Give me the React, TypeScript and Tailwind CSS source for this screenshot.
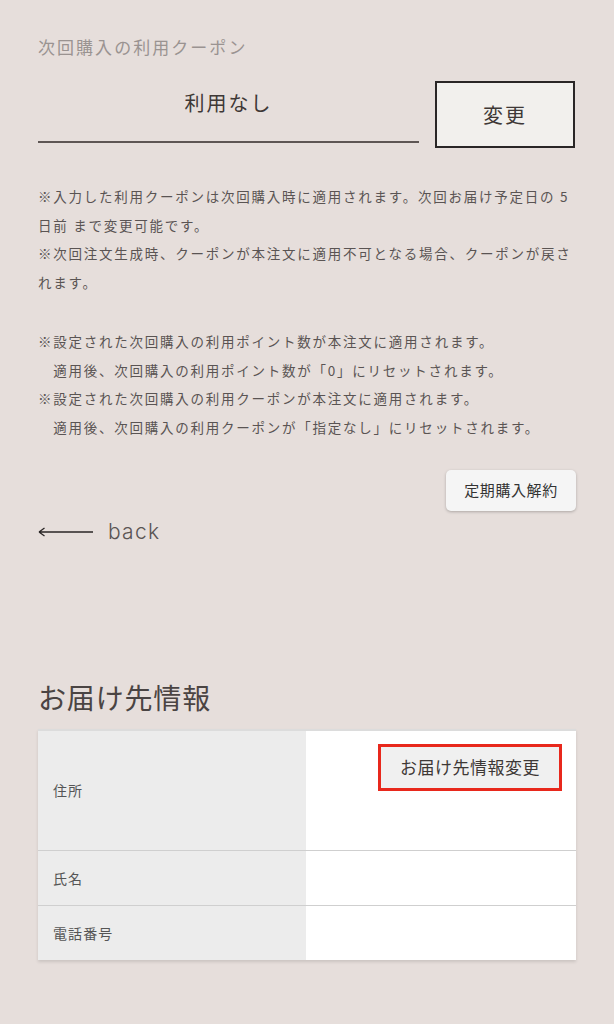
import React from 'react';

const notesA = [
    '※入力した利用クーポンは次回購入時に適用されます。次回お届け予定日の 5',
    '日前 まで変更可能です。',
    '※次回注文生成時、クーポンが本注文に適用不可となる場合、クーポンが戻さ',
    'れます。',
];

const notesB = [
    '※設定された次回購入の利用ポイント数が本注文に適用されます。',
    '\u3000適用後、次回購入の利用ポイント数が「0」にリセットされます。',
    '※設定された次回購入の利用クーポンが本注文に適用されます。',
    '\u3000適用後、次回購入の利用クーポンが「指定なし」にリセットされます。',
];

const font = { fontFamily: '"Noto Sans CJK JP", "Noto Sans", sans-serif' };

export default function App() {
    return (
        <div className="min-h-[1024px] bg-[#e6dedb] px-[38px] pt-[35px] text-[#4a4443]" style={font}>
            <p className="text-[17px] leading-[24px] tracking-[0.12em] text-[#9a9391]">次回購入の利用クーポン</p>

            <div className="mt-[22px] flex items-start gap-[16px]">
                <div className="flex h-[62px] flex-1 items-start justify-center border-b-2 border-[#5e5654] pt-[7px]">
                    <span className="text-[20px] leading-[30px] tracking-[0.1em] text-[#3e3836]">利用なし</span>
                </div>
                <button className="mr-px h-[67px] w-[140px] border-2 border-[#2a2626] bg-[#f2f0ed] text-[20px] tracking-[0.1em] text-[#3e3836]">
                    変更
                </button>
            </div>

            <div className="mt-[34px] whitespace-nowrap text-[13.5px] leading-[28.5px] tracking-[0.13em] text-[#5a5453]">
                {notesA.map(n => (
                    <p key={n}>{n}</p>
                ))}
                <div className="h-[31px]" />
                {notesB.map(n => (
                    <p key={n}>{n}</p>
                ))}
            </div>

            <div className="mt-[29px] flex justify-end">
                <button className="h-[41px] w-[130px] rounded-[5px] bg-[#f5f5f5] text-[15px] tracking-[0.04em] text-[#333] shadow-[0_1px_3px_rgba(0,0,0,0.25)]">
                    定期購入解約
                </button>
            </div>

            <div className="mt-[6px] flex items-center gap-[14px]">
                <svg width="56" height="12" viewBox="0 0 56 12" className="text-[#2a2626]">
                    <path d="M1 6H55M1 6L6.5 2M1 6L6.5 10" fill="none" stroke="currentColor" strokeWidth="1.3" />
                </svg>
                <span className="text-[21px] leading-[30px] tracking-[0.06em] text-[#5a5453]" style={{ fontFamily: 'Inter, "Noto Sans", sans-serif', fontWeight: 300 }}>
                    back
                </span>
            </div>

            <h2 className="mt-[132px] text-[28px] leading-[36px] tracking-[0.03em] text-[#4a4443]">お届け先情報</h2>

            <div className="mt-[14px] border-t-2 border-[#dcdcdc] shadow-[0_2px_3px_rgba(0,0,0,0.12)]">
                <div className="flex h-[120px] border-b border-[#cfcfcf]">
                    <div className="flex w-[268px] items-center bg-[#ececec] px-[15px] text-[14px] tracking-[0.08em] text-[#555]">住所</div>
                    <div className="flex flex-1 justify-end bg-white pr-[14px] pt-[13px]">
                        <div className="h-[47px] w-[184px] border-[3px] border-[#e8281c] bg-[#f0f0f0] text-center text-[17px] leading-[40px] tracking-[0.03em] text-[#3e3836]">
                            お届け先情報変更
                        </div>
                    </div>
                </div>
                <div className="flex h-[55px] border-b border-[#cfcfcf]">
                    <div className="flex w-[268px] items-center bg-[#ececec] px-[15px] text-[14px] tracking-[0.08em] text-[#555]">氏名</div>
                    <div className="flex-1 bg-white" />
                </div>
                <div className="flex h-[54px]">
                    <div className="flex w-[268px] items-center bg-[#ececec] px-[15px] text-[14px] tracking-[0.08em] text-[#555]">電話番号</div>
                    <div className="flex-1 bg-white" />
                </div>
            </div>
        </div>
    );
}
